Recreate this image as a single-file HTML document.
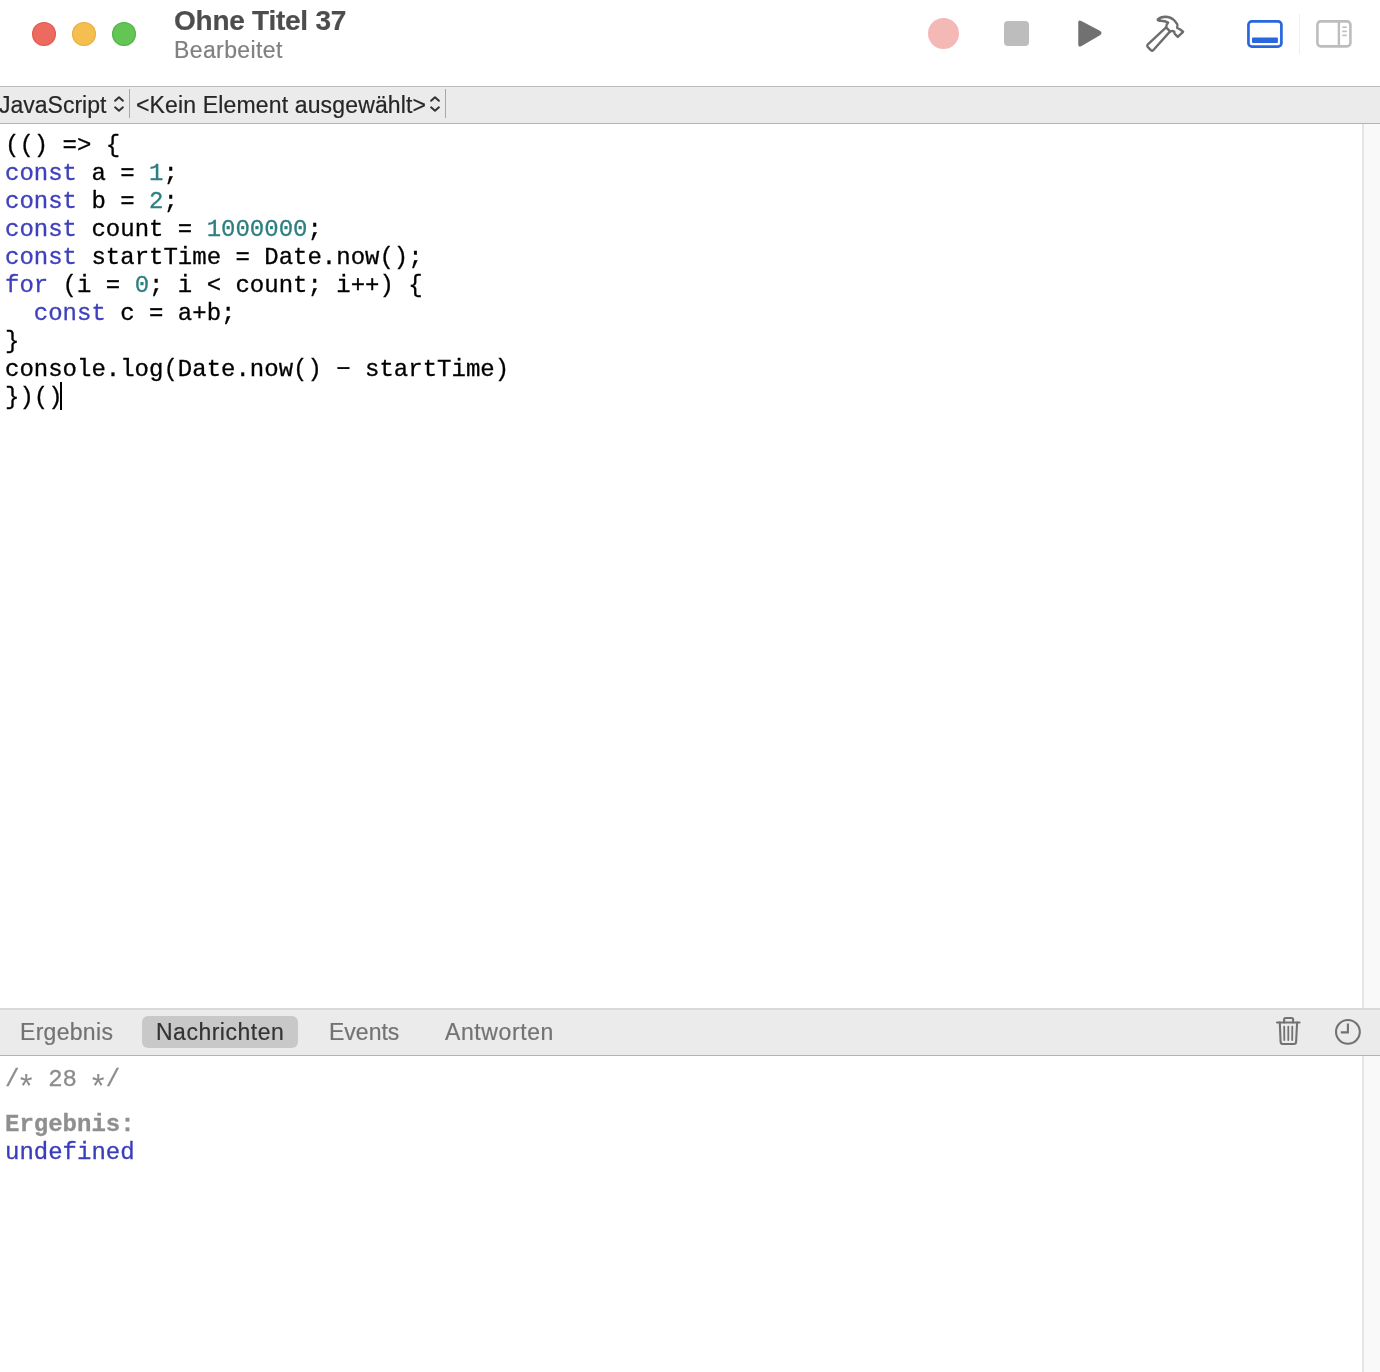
<!DOCTYPE html>
<html>
<head>
<meta charset="utf-8">
<style>
html,body{margin:0;padding:0;}
body{-webkit-font-smoothing:antialiased;width:1380px;height:1372px;position:relative;overflow:hidden;background:#fff;font-family:"Liberation Sans",sans-serif;}
.abs{position:absolute;}
.ui{font-family:"Liberation Sans",sans-serif;white-space:pre;line-height:1;will-change:transform;-webkit-text-stroke:0.2px currentColor;}
.mono{font-family:"Liberation Mono",monospace;white-space:pre;will-change:transform;-webkit-text-stroke:0.3px currentColor;}
/* toolbar */
#toolbar{left:0;top:0;width:1380px;height:86px;background:#fff;}
#tbborder{left:0;top:86px;width:1380px;height:1px;background:#bdbdbd;}
.light{border-radius:50%;width:24px;height:24px;top:22px;}
/* nav bar */
#nav{left:0;top:87px;width:1380px;height:36px;background:#ebebeb;}
#navborder{left:0;top:123px;width:1380px;height:1px;background:#b3b3b3;}
/* code */
#code{left:5px;top:132px;font-size:24px;line-height:28px;color:#000;}
.kw{color:#3f40bd;}
.ast{display:inline-block;width:14.4px;text-align:center;transform:translateY(9.5px) scale(1.35);-webkit-text-stroke:0;}
.num{color:#2d7f80;}
/* scroll track */
.track{left:1364px;width:16px;background:#f9f9f9;}
.trackline{left:1362px;width:2px;background:#e5e5e5;}
/* tab bar */
#tabtop{left:0;top:1008px;width:1380px;height:2px;background:#d9d9d9;}
#tabbar{left:0;top:1010px;width:1380px;height:45px;background:#ebebeb;}
#tabbot{left:0;top:1055px;width:1380px;height:1px;background:#b3b3b3;}
.tab{font-size:23px;color:#737373;}
#pill{left:142px;top:1016px;width:156px;height:32px;border-radius:6px;background:#c8c8c8;}
</style>
</head>
<body>
<div id="toolbar" class="abs"></div>
<div id="tbborder" class="abs"></div>
<div class="abs light" style="left:32px;background:#ed6a5e;box-shadow:inset 0 0 0 1px rgba(200,60,50,.35);"></div>
<div class="abs light" style="left:72px;background:#f5bf4f;box-shadow:inset 0 0 0 1px rgba(200,140,30,.35);"></div>
<div class="abs light" style="left:112px;background:#62c554;box-shadow:inset 0 0 0 1px rgba(40,140,40,.35);"></div>
<div class="abs ui" style="left:174px;top:7px;font-size:28px;font-weight:bold;color:#4d4d4d;letter-spacing:-0.25px;">Ohne Titel 37</div>
<div class="abs ui" style="left:174px;top:39px;font-size:23px;color:#808080;letter-spacing:0.4px;">Bearbeitet</div>

<!-- toolbar icons -->
<div class="abs" style="left:928px;top:18px;width:31px;height:31px;border-radius:50%;background:#f4b8b5;"></div>
<div class="abs" style="left:1004px;top:21px;width:24.5px;height:25px;border-radius:4px;background:#bdbdbd;"></div>
<svg class="abs" style="left:1070px;top:13.3px;" width="40" height="40" viewBox="0 0 40 40">
  <path d="M10.5 8.5 Q9 7.5 9 9.5 L9 31.5 Q9 33.5 10.8 32.5 L30 21.3 Q31.5 20 30 18.7 Z" fill="#717171" stroke="#717171" stroke-width="1.5" stroke-linejoin="round"/>
</svg>
<svg class="abs" style="left:1140px;top:10px;" width="50" height="45" viewBox="0 0 50 45">
  <g fill="none" stroke="#6d6d6d" stroke-width="2.4" stroke-linejoin="round" stroke-linecap="round">
    <path d="M26.1 17.4 L7.6 34.6 Q6.7 35.8 7.7 36.9 L11.1 40.3 Q12.2 41.2 13.2 40.2 L30.1 21.4 Z"/>
    <path d="M26.1 17.4 Q26.3 14.3 28.1 12.6 Q25 10.6 20.2 10.7 Q17.6 10.9 17.7 9.6 Q20.5 6.8 25.4 6.7 Q30.6 6.8 34.4 10.5 L37.1 13.9 Q37.9 15 37.1 17.9 Q38 18.6 39.9 19.3 L43.1 21.8 L37.8 26.9 L35 24.2 Q34.1 23.2 34.3 21.5 Q32.4 20.7 30.1 21.4"/>
  </g>
</svg>
<svg class="abs" style="left:1240px;top:14px;" width="50" height="40" viewBox="0 0 50 40">
  <rect x="8.45" y="7.35" width="32.95" height="25.2" rx="3.4" fill="none" stroke="#2867e0" stroke-width="2.7"/>
  <rect x="12" y="23.6" width="25.9" height="5.4" rx="1" fill="#2867e0"/>
</svg>
<div class="abs" style="left:1298.5px;top:14px;width:1.5px;height:40px;background:#efefef;"></div>
<svg class="abs" style="left:1310px;top:14px;" width="50" height="40" viewBox="0 0 50 40">
  <rect x="7.4" y="7.4" width="33" height="25" rx="3.3" fill="none" stroke="#bdbdbd" stroke-width="2.6"/>
  <line x1="28.9" y1="7" x2="28.9" y2="33" stroke="#bdbdbd" stroke-width="2.4"/>
  <line x1="32.3" y1="13.2" x2="36.8" y2="13.2" stroke="#bdbdbd" stroke-width="1.6"/>
  <line x1="32.3" y1="17.4" x2="36.8" y2="17.4" stroke="#bdbdbd" stroke-width="1.6"/>
  <line x1="32.3" y1="21.4" x2="36.8" y2="21.4" stroke="#bdbdbd" stroke-width="1.6"/>
</svg>

<!-- nav bar -->
<div id="nav" class="abs"></div>
<div id="navborder" class="abs"></div>
<div class="abs ui" style="left:-1px;top:93.5px;font-size:23px;color:#262626;">JavaScript</div>
<svg class="abs" style="left:112px;top:94px;" width="14" height="20" viewBox="0 0 14 20">
  <path d="M3.1 6.8 L7 3.2 L10.9 6.8 M3.1 13.3 L7 16.8 L10.9 13.3" fill="none" stroke="#333" stroke-width="2" stroke-linecap="round" stroke-linejoin="round"/>
</svg>
<div class="abs" style="left:129px;top:89px;width:1px;height:29px;background:#a8a8a8;"></div>
<div class="abs ui" style="left:136px;top:93.5px;font-size:23px;color:#262626;letter-spacing:0.15px;">&lt;Kein Element ausgewählt&gt;</div>
<svg class="abs" style="left:428px;top:94px;" width="14" height="20" viewBox="0 0 14 20">
  <path d="M3.1 6.8 L7 3.2 L10.9 6.8 M3.1 13.3 L7 16.8 L10.9 13.3" fill="none" stroke="#333" stroke-width="2" stroke-linecap="round" stroke-linejoin="round"/>
</svg>
<div class="abs" style="left:445px;top:89px;width:1px;height:29px;background:#a8a8a8;"></div>

<!-- scroll tracks -->
<div class="abs track" style="top:124px;height:884px;"></div>
<div class="abs trackline" style="top:124px;height:884px;"></div>
<div class="abs track" style="top:1056px;height:316px;"></div>
<div class="abs trackline" style="top:1056px;height:316px;"></div>

<!-- code -->
<div id="code" class="abs mono">(() =&gt; {
<span class="kw">const</span> a = <span class="num">1</span>;
<span class="kw">const</span> b = <span class="num">2</span>;
<span class="kw">const</span> count = <span class="num">1000000</span>;
<span class="kw">const</span> startTime = Date.now();
<span class="kw">for</span> (i = <span class="num">0</span>; i &lt; count; i++) {
  <span class="kw">const</span> c = a+b;
}
console.log(Date.now() &#x2212; startTime)
})()</div>
<div class="abs" style="left:60px;top:382px;width:2px;height:28px;background:#000;"></div>

<!-- tab bar -->
<div id="tabtop" class="abs"></div>
<div id="tabbar" class="abs"></div>
<div id="tabbot" class="abs"></div>
<div id="pill" class="abs"></div>
<div class="abs ui tab" style="left:20px;top:1021px;letter-spacing:0.3px;">Ergebnis</div>
<div class="abs ui tab" style="left:156px;top:1021px;color:#333;letter-spacing:0.5px;">Nachrichten</div>
<div class="abs ui tab" style="left:328.5px;top:1021px;">Events</div>
<div class="abs ui tab" style="left:445px;top:1021px;letter-spacing:0.6px;">Antworten</div>
<svg class="abs" style="left:1270px;top:1012px;" width="36" height="38" viewBox="0 0 36 38">
  <g fill="none" stroke="#727272" stroke-width="2.1" stroke-linecap="round" stroke-linejoin="round">
    <path d="M7 10.5 L29.6 10.5"/>
    <path d="M14.1 10.5 L14.1 7.6 Q14.1 6 15.7 6 L21.5 6 Q23.1 6 23.1 7.6 L23.1 10.5"/>
    <path d="M9.8 10.5 L10.6 29.8 Q10.8 32 13 32 L23.8 32 Q26 32 26.1 29.8 L27.1 10.5"/>
    <path d="M14.2 14.6 L14.3 28.1 M18.3 14.6 L18.3 28.1 M22.3 14.6 L22.2 28.1" stroke-width="1.8"/>
  </g>
</svg>
<svg class="abs" style="left:1328px;top:1012px;" width="40" height="40" viewBox="0 0 40 40">
  <circle cx="19.9" cy="19.85" r="11.9" fill="none" stroke="#727272" stroke-width="2.1"/>
  <path d="M19.9 11.6 L19.9 20.4 L12.8 20.4" fill="none" stroke="#727272" stroke-width="2.1"/>
</svg>

<!-- output -->
<div class="abs mono" style="left:5px;top:1066px;font-size:24px;line-height:28px;color:#8c8c8c;">/<span class="ast">*</span> 28 <span class="ast">*</span>/</div>
<div class="abs mono" style="left:5px;top:1111px;font-size:24px;line-height:28px;color:#8f8f8f;font-weight:bold;">Ergebnis:</div>
<div class="abs mono" style="left:5px;top:1139px;font-size:24px;line-height:28px;color:#3a3dbb;">undefined</div>
</body>
</html>
